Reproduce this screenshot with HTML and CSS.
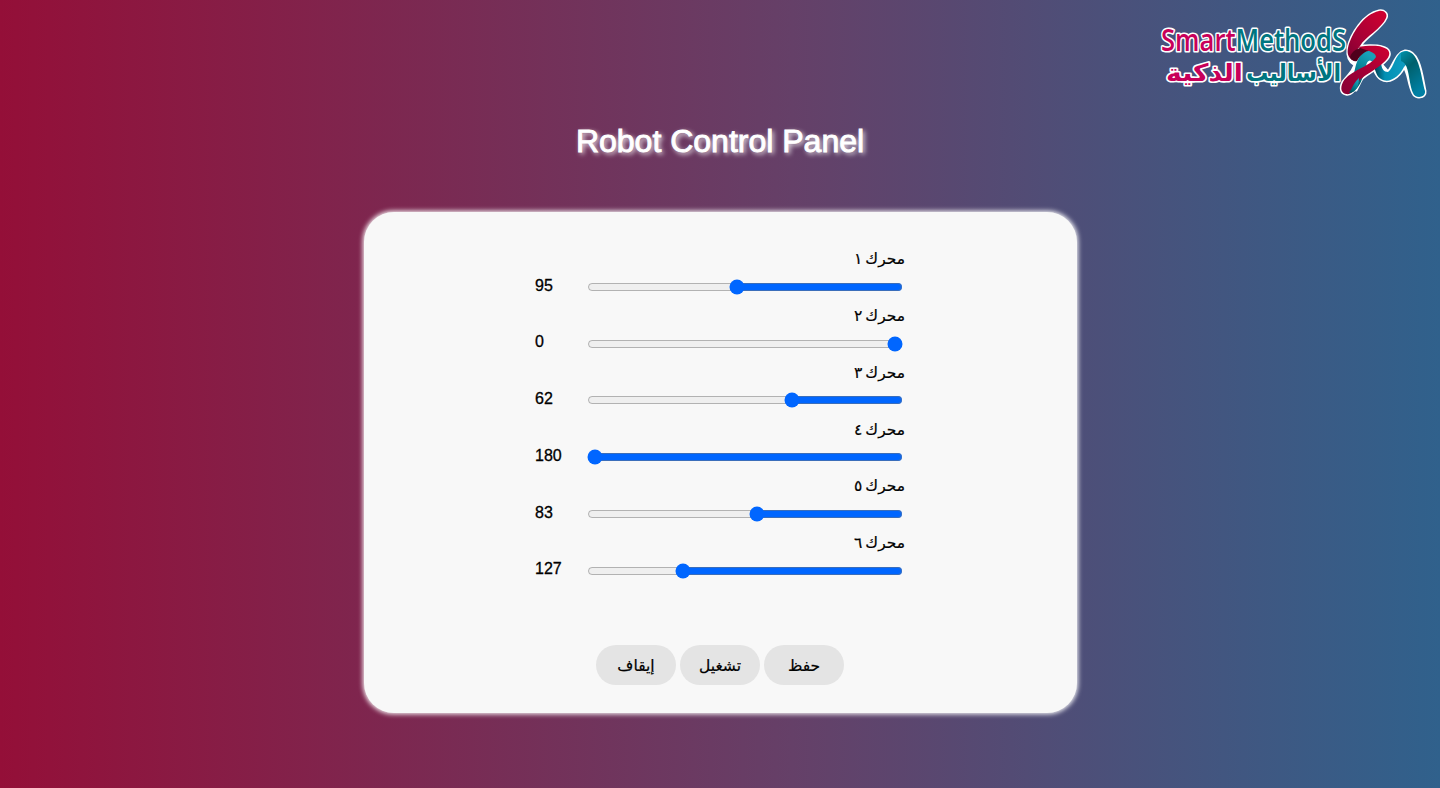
FILE: index.html
```
<!DOCTYPE html>
<html lang="ar">
<head>
<meta charset="utf-8">
<title>Robot Control Panel</title>
<link rel="stylesheet" href="styles.css">
</head>
<body>
<header class="header">
<svg class="logo" width="290" height="110" viewBox="0 0 290 110" role="img" aria-label="Smart Methods">
<defs>
<linearGradient id="upper" x1="0" y1="1" x2=".8" y2="0"><stop offset="0" stop-color="#7d0030"/><stop offset=".4" stop-color="#a40036"/><stop offset="1" stop-color="#cc0030"/></linearGradient>
<linearGradient id="lower" x1="0" y1="1" x2="1" y2="0"><stop offset="0" stop-color="#880034"/><stop offset=".45" stop-color="#a00036"/><stop offset="1" stop-color="#d00030"/></linearGradient>
<linearGradient id="arch" x1="0" y1="1" x2=".5" y2="0"><stop offset="0" stop-color="#004850"/><stop offset=".5" stop-color="#00788a"/><stop offset="1" stop-color="#18a0b8"/></linearGradient>
<linearGradient id="wave" x1="0" y1="0" x2="1" y2="0"><stop offset="0" stop-color="#003c4c"/><stop offset=".3" stop-color="#0090b4"/><stop offset="1" stop-color="#14a0c4"/></linearGradient>
<linearGradient id="tail" x1="0" y1="0" x2=".5" y2="1"><stop offset="0" stop-color="#0090a8"/><stop offset=".4" stop-color="#00606c"/><stop offset="1" stop-color="#0080a4"/></linearGradient>
</defs>
<g class="logo-text">
<text class="latin" x="11" y="51" textLength="185" lengthAdjust="spacingAndGlyphs"><tspan class="pink">Smart</tspan><tspan class="green">MethodS</tspan></text>
<text class="arabic green" x="96" y="81" textLength="95" lengthAdjust="spacingAndGlyphs">الأساليب</text>
<text class="arabic pink" x="16" y="81" textLength="77" lengthAdjust="spacingAndGlyphs">الذكية</text>
</g>
<g class="halo">
<path d="M229 11C234 10 238 14 236 18C232 28 215 37 210 46C217 46 226 45 232 47C240 49 241 54 237 59C228 70 212 75 208 83C204 91 201 95 196 94C191 93 190 88 193 82C200 73 202 73 205 65C199 62 197 57 198 48C201 34 214 14 229 11Z"/>
<path d="M201 89C206 79 205 64 211 57C221 46 227 58 230 63L238 72C244 65 246 53 255 51C270 50 272 78 275 91C276 98 265 99 263 93C258 83 259 73 254 67C249 77 239 84 231 79C225 75 225 69 222 66L214 74L206 90Z"/>
</g>
<path fill="url(#arch)" d="M198 93C205 82 203 62 212 54C221 46 227 55 229 60L223 63C220 58 217 61 216 66C213 78 209 92 198 93Z"/>
<path fill="url(#wave)" d="M224 67L231 61C231 69 234 72 238 72C245 67 245 50 257 51C263 53 260 61 254 67C249 77 239 84 231 79C227 77 226 72 224 67Z"/>
<path fill="url(#tail)" d="M251 53C269 44 271 77 275 91C276 98 265 99 263 93C258 81 260 64 251 61Z"/>
<path fill="url(#upper)" d="M229 11C234 10 238 14 236 18C232 28 215 37 210 46C206 51 204 55 202 60C198 57 197 53 198 48C201 34 214 14 229 11Z"/>
<path class="shade" d="M200 57C203 48 214 45 226 50C216 49 210 55 207 61C204 62 201 60 200 57Z"/>
<path fill="url(#lower)" d="M207 47C217 46 226 45 232 47C240 49 241 54 237 59C228 70 212 75 208 83C204 91 201 95 196 94C191 93 190 88 193 82C200 70 220 67 226 57C226 52 216 50 207 47Z"/>
<path fill="url(#arch)" d="M199 93C203 86 205 81 209 78C209 86 206 93 199 93Z"/>
</svg>
</header>
<main class="main">
<h1 class="title">Robot Control Panel</h1>
<form class="panel" dir="rtl">
<div class="motors">
<div class="motor"><label class="name" for="m1">محرك ١</label><div class="control"><input class="slider" id="m1" type="range" min="0" max="180" value="95"><output class="value">95</output></div></div>
<div class="motor"><label class="name" for="m2">محرك ٢</label><div class="control"><input class="slider" id="m2" type="range" min="0" max="180" value="0"><output class="value">0</output></div></div>
<div class="motor"><label class="name" for="m3">محرك ٣</label><div class="control"><input class="slider" id="m3" type="range" min="0" max="180" value="62"><output class="value">62</output></div></div>
<div class="motor"><label class="name" for="m4">محرك ٤</label><div class="control"><input class="slider" id="m4" type="range" min="0" max="180" value="180"><output class="value">180</output></div></div>
<div class="motor"><label class="name" for="m5">محرك ٥</label><div class="control"><input class="slider" id="m5" type="range" min="0" max="180" value="83"><output class="value">83</output></div></div>
<div class="motor"><label class="name" for="m6">محرك ٦</label><div class="control"><input class="slider" id="m6" type="range" min="0" max="180" value="127"><output class="value">127</output></div></div>
</div>
<div class="actions">
<button class="button" type="button">حفظ</button>
<button class="button" type="button">تشغيل</button>
<button class="button" type="button">إيقاف</button>
</div>
</form>
</main>
</body>
</html>
```
FILE: styles.css
```
* { box-sizing: border-box; }
body {
  margin: 0;
  height: 788px;
  overflow: hidden;
  background: linear-gradient(to right, #940f38, #654068 55%, #30618c);
  font-family: "Liberation Sans", "DejaVu Sans", sans-serif;
}
.header { display: flex; justify-content: flex-end; height: 110px; }
.logo { display: block; }
.logo-text { paint-order: stroke; stroke: #fff; stroke-width: 3.2px; stroke-linejoin: round; }
.latin { font: 600 30px "Open Sans", "Noto Sans", sans-serif; }
.arabic { font: 700 24px "DejaVu Sans", sans-serif; }
.pink { fill: #c8005a; }
.green { fill: #007680; }
.halo { fill: #fff; stroke: #fff; stroke-width: 3px; stroke-linejoin: round; }
.shade { fill: #50001c; }
.main { display: flex; flex-direction: column; align-items: center; }
.title {
  margin: 13px 0 52px;
  font-size: 32px;
  line-height: 37px;
  font-weight: 400;
  color: #fff;
  -webkit-text-stroke: .9px #fff;
  text-shadow: 2px 2px 5px #fff;
}
.panel {
  display: flex;
  flex-direction: column;
  align-items: center;
  width: 713px;
  height: 501px;
  padding-top: 34px;
  border-radius: 30px;
  background: #f8f8f8;
  box-shadow: 0 0 5px .5px #fff;
}
.motors { width: 370px; padding-top: .4px; }
.motor { height: 56.75px; }
.name {
  display: block;
  height: 32px;
  font: 15.5px/26px "DejaVu Sans", sans-serif;
  word-spacing: -2px;
  -webkit-text-stroke: .2px #000;
}
.control { display: flex; align-items: center; justify-content: space-between; height: 16px; padding-right: 2px; }
.slider { width: 316px; height: 16px; margin: 1px 0 0; accent-color: #06f; }
.value { width: 52px; direction: ltr; font-size: 16px; line-height: 16px; margin-top: -1.6px; -webkit-text-stroke: .3px #000; }
.actions { display: flex; gap: 4px; margin-top: 58.3px; }
.button {
  width: 80px;
  height: 40px;
  padding: 2px 0 0;
  border: 0;
  border-radius: 20px;
  background: #e4e4e4;
  color: #000;
  font: 15.5px "DejaVu Sans", sans-serif;
  -webkit-text-stroke: .2px #000;
}
```
